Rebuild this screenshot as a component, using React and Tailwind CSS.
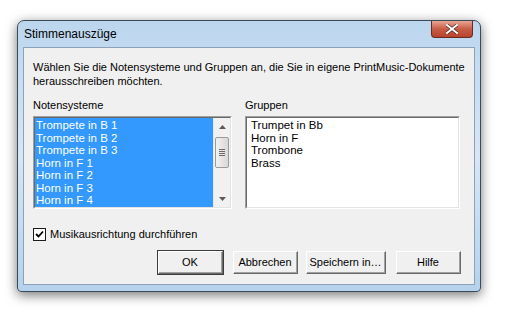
import React from 'react';

const font = { fontFamily: '"Liberation Sans", Arial, sans-serif' };

const stimmen = [
  'Trompete in B 1',
  'Trompete in B 2',
  'Trompete in B 3',
  'Horn in F 1',
  'Horn in F 2',
  'Horn in F 3',
  'Horn in F 4',
];

const gruppen = ['Trumpet in Bb', 'Horn in F', 'Trombone', 'Brass'];

const Button = ({ children, isDefault }) => (
  <div
    className={`flex h-[23px] items-center justify-center bg-[#f0f0f0] border border-t-white border-l-white border-r-[#696969] border-b-[#696969] ${
      isDefault ? 'outline outline-1 outline-[#3c3c3c]' : ''
    }`}
  >
    <div className="flex h-full w-full items-center justify-center whitespace-nowrap border-r border-b border-[#a0a0a0] text-black">
      {children}
    </div>
  </div>
);

const Sunken = ({ className, children }) => (
  <div className={`border border-t-[#a0a0a0] border-l-[#a0a0a0] border-r-white border-b-white ${className}`}>
    <div className="h-full w-full overflow-hidden border border-t-[#696969] border-l-[#696969] border-r-[#e3e3e3] border-b-[#e3e3e3] bg-white">
      {children}
    </div>
  </div>
);

const Scrollbar = () => (
  <div className="flex h-full w-[17px] flex-col border-l border-[#e8e8e8] bg-[#f1f1f1]">
    <div className="flex h-[17px] items-center justify-center">
      <svg width="7" height="4" viewBox="0 0 7 4"><path d="M0 4 L3.5 0 L7 4 Z" fill="#5a5a5a" /></svg>
    </div>
    <div className="mx-[1px] mt-[2px] flex h-[31px] items-center justify-center rounded-[2px] border border-[#9a9a9a] bg-gradient-to-r from-[#f2f2f2] to-[#d8d8d8]">
      <div className="flex flex-col gap-[1px]">
        <div className="h-px w-[6px] bg-[#6b6b6b]" />
        <div className="h-px w-[6px] bg-[#6b6b6b]" />
        <div className="h-px w-[6px] bg-[#6b6b6b]" />
        <div className="h-px w-[6px] bg-[#6b6b6b]" />
      </div>
    </div>
    <div className="flex-1" />
    <div className="flex h-[17px] items-center justify-center">
      <svg width="7" height="4" viewBox="0 0 7 4"><path d="M0 0 L3.5 4 L7 0 Z" fill="#5a5a5a" /></svg>
    </div>
  </div>
);

export default function App() {
  return (
    <div className="h-[320px] w-[510px] bg-white pl-[17px] pt-[20px]" style={font}>
      <div className="flex h-[272px] w-[464px] flex-col rounded-t-[7px] rounded-b-[4px] border border-[#3a4a5a] bg-gradient-to-b from-[#bcd6ee] via-[#d6e7f6] to-[#b5d2ec] shadow-[0_3px_12px_rgba(0,0,0,0.55)]">
        {/* Title bar */}
        <div className="flex h-[26px] shrink-0 items-start justify-between pl-[6px] pr-[7px]">
          <div className="pt-[6px] text-[12px] leading-[14px] text-black">Stimmenauszüge</div>
          <div className="flex h-[17px] w-[42px] items-center justify-center rounded-b-[4px] border border-t-0 border-[#6b2a20] bg-gradient-to-b from-[#e8a595] via-[#c75c45] to-[#b8432c]">
            <svg width="12" height="10" viewBox="0 0 12 10">
              <path d="M1 1 L11 9 M11 1 L1 9" stroke="#3a1a14" strokeWidth="3.2" strokeLinecap="square" />
              <path d="M1 1 L11 9 M11 1 L1 9" stroke="#ffffff" strokeWidth="2" strokeLinecap="square" />
            </svg>
          </div>
        </div>

        {/* Client area */}
        <div className="mx-[5px] mb-[6px] flex min-h-0 flex-1 flex-col overflow-hidden border border-[#8da2b8] bg-[#f0f0f0] pl-[9px] pr-[13px] pt-[12px] text-[11px] text-black">
          <p className="whitespace-nowrap leading-[14px]">
            Wählen Sie die Notensysteme und Gruppen an, die Sie in eigene PrintMusic-Dokumente
            <br />
            herausschreiben möchten.
          </p>

          <div className="mt-[10px] flex gap-[13px]">
            <div className="flex w-[199px] flex-col">
              <div className="leading-[14px]">Notensysteme</div>
              <Sunken className="mt-[4px] h-[93px]">
                <div className="flex h-full">
                  <div className="flex-1 bg-[#3399ff] pl-px pt-px">
                    {stimmen.map((s) => (
                      <div key={s} className="h-[12.5px] text-[11.5px] leading-[12.5px] text-white">{s}</div>
                    ))}
                  </div>
                  <Scrollbar />
                </div>
              </Sunken>
            </div>
            <div className="flex w-[215px] flex-col">
              <div className="leading-[14px]">Gruppen</div>
              <Sunken className="mt-[4px] h-[93px]">
                <div className="pl-[4px] pt-px">
                  {gruppen.map((g) => (
                    <div key={g} className="h-[12.5px] text-[11.5px] leading-[12.5px]">{g}</div>
                  ))}
                </div>
              </Sunken>
            </div>
          </div>

          <div className="mt-[18px] flex items-center gap-[4px]">
            <div className="flex h-[13px] w-[13px] items-center justify-center border border-[#1c1c1c] bg-white">
              <svg width="9" height="9" viewBox="0 0 9 9">
                <path d="M1 4 L3.5 6.5 L8 1.5" stroke="#000" strokeWidth="1.8" fill="none" />
              </svg>
            </div>
            <span className="leading-[14px]">Musikausrichtung durchführen</span>
          </div>

          <div className="mt-[10px] flex justify-end">
            <div className="w-[65px]"><Button isDefault>OK</Button></div>
            <div className="ml-[10px] w-[65px]"><Button>Abbrechen</Button></div>
            <div className="ml-[8px] w-[80px]"><Button>Speichern in…</Button></div>
            <div className="ml-[10px] w-[65px]"><Button>Hilfe</Button></div>
          </div>
        </div>
      </div>
    </div>
  );
}
